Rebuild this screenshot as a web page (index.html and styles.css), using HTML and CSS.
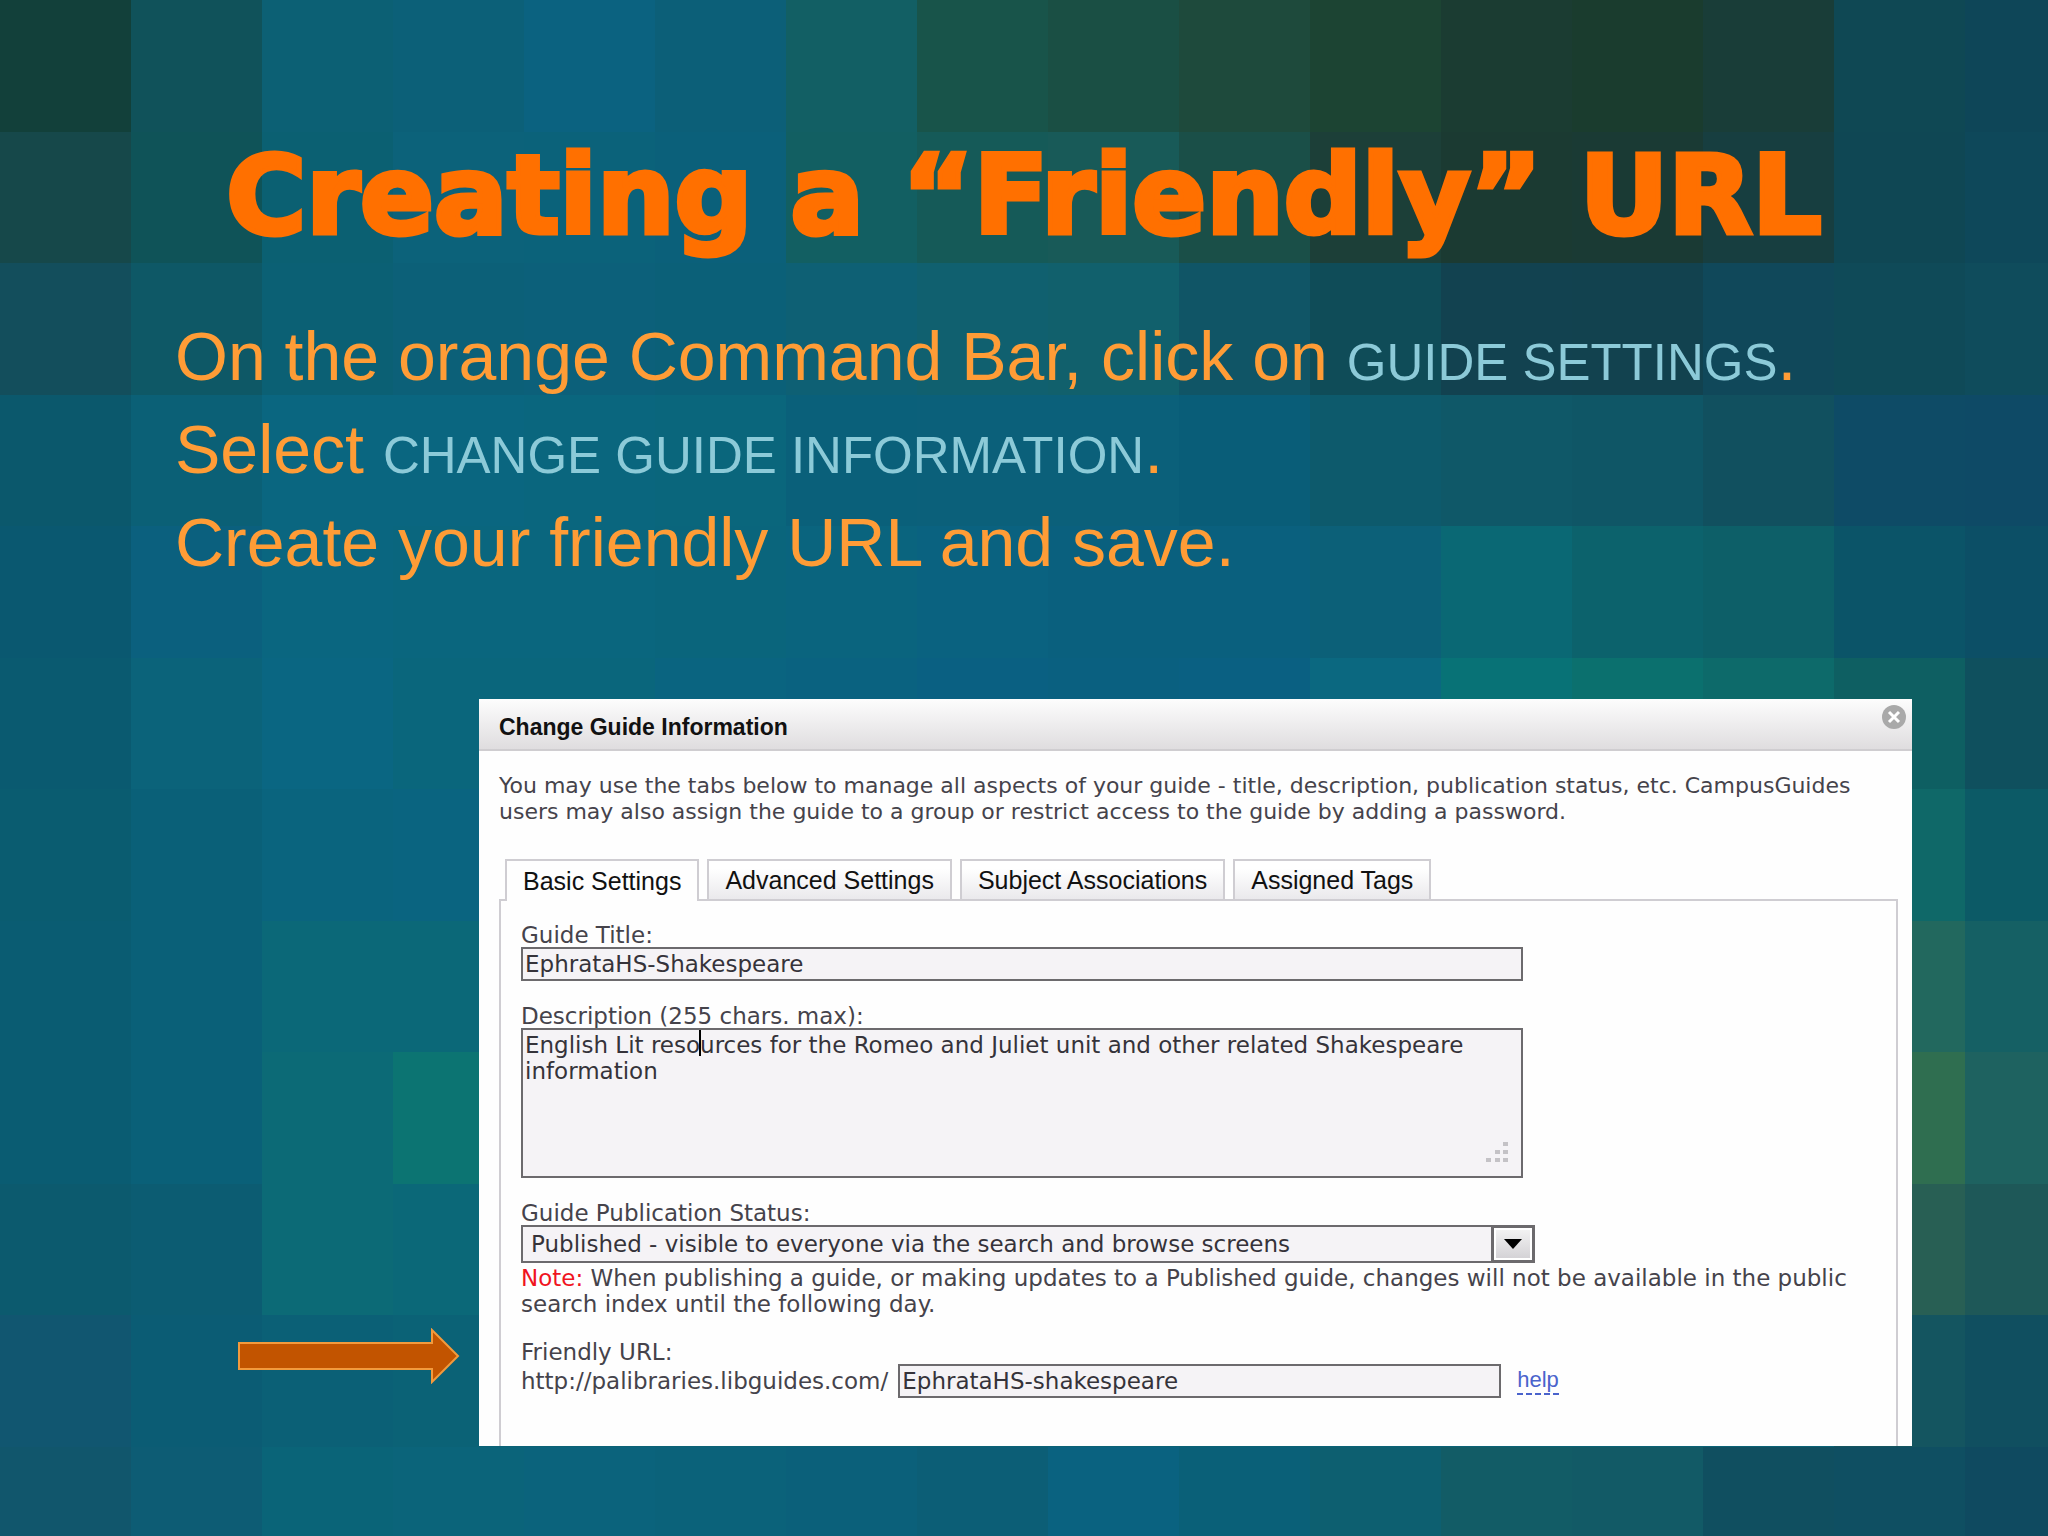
FILE: index.html
```html
<!DOCTYPE html>
<html lang="en">
<head>
<meta charset="utf-8">
<title>Creating a “Friendly” URL</title>
<link rel="stylesheet" href="styles.css">
</head>
<body>
<div class="mosaic" id="mosaic" aria-hidden="true"></div>
<main class="slide">
  <h1 class="title">Creating a “Friendly” URL</h1>
  <div class="steps">
    <p>On the orange Command Bar, click on <span class="command">GUIDE SETTINGS</span>.</p>
    <p>Select <span class="command">CHANGE GUIDE INFORMATION</span>.</p>
    <p>Create your friendly URL and save.</p>
  </div>
  <div class="demo">
    <svg class="arrow" width="224" height="56" viewBox="0 0 224 56" aria-hidden="true">
      <path d="M2 15H195V2L221 28L195 54V41H2Z" fill="#c25400" stroke="#f39a3c" stroke-width="2"/>
    </svg>
    <section class="dialog">
      <header class="dialog-head">
        <h2>Change Guide Information</h2>
        <button class="close" type="button" aria-label="Close">
          <svg width="24" height="24" viewBox="0 0 24 24"><circle cx="12" cy="12" r="12" fill="#a9a9a9"/><path d="M7 7L17 17M17 7L7 17" stroke="#fff" stroke-width="3"/></svg>
        </button>
      </header>
      <div class="dialog-body">
        <p class="intro">You may use the tabs below to manage all aspects of your guide - title, description, publication status, etc. CampusGuides users may also assign the guide to a group or restrict access to the guide by adding a password.</p>
        <nav class="tabs">
          <button class="tab active" type="button">Basic Settings</button>
          <button class="tab" type="button">Advanced Settings</button>
          <button class="tab" type="button">Subject Associations</button>
          <button class="tab" type="button">Assigned Tags</button>
        </nav>
        <form class="panel">
          <div class="field">
            <label for="guide-title">Guide Title:</label>
            <input class="box wide" id="guide-title" type="text" value="EphrataHS-Shakespeare">
          </div>
          <div class="field">
            <label for="description">Description (255 chars. max):</label>
            <div class="area wide">
              <textarea class="box" id="description">English Lit resources for the Romeo and Juliet unit and other related Shakespeare information</textarea>
              <span class="caret"></span>
              <svg class="grip" width="24" height="20" viewBox="0 0 24 20" fill="#c4c2c6" aria-hidden="true"><path d="M18 0h5v4h-5zM10 8h5v4h-5zM18 8h5v4h-5zM1 16h5v4h-5zM10 16h5v4h-5zM18 16h5v4h-5z"/></svg>
            </div>
          </div>
          <div class="field">
            <label for="status">Guide Publication Status:</label>
            <div class="pick">
              <select class="box" id="status"><option>Published - visible to everyone via the search and browse screens</option></select>
              <span class="drop"><svg width="18" height="10" viewBox="0 0 18 10" aria-hidden="true"><path d="M0 0H18L9 10Z" fill="#000"/></svg></span>
            </div>
            <p class="note"><span class="warn">Note:</span> When publishing a guide, or making updates to a Published guide, changes will not be available in the public search index until the following day.</p>
          </div>
          <div class="field">
            <label for="url">Friendly URL:</label>
            <div class="url">
              <span>http://palibraries.libguides.com/</span>
              <input class="box" id="url" type="text" value="EphrataHS-shakespeare">
              <a class="help" href="#help">help</a>
            </div>
          </div>
        </form>
      </div>
    </section>
  </div>
</main>
<script src="mosaic.js"></script>
</body>
</html>
```
FILE: mosaic.js
```js
// Backdrop tiles, one string per row, sixteen colours each.
const rows = [
  "12403a 10525a 0c6074 0c6078 0b6280 0c5f78 125f64 18544a 1a4f44 1e4a3c 1c4433 1b3c32 1a3c2e 193d38 0f4854 0e4658",
  "16484a 0f5358 0b6072 0c627a 0b627a 0b607a 125f62 155a58 185a58 1a4f48 1c3f38 1b3a32 1a3a34 173e40 0f4754 0e485a",
  "134e5c 0e5866 0b6074 0c6078 0c607a 0b6078 0e6074 10606f 11606c 105566 0f4c58 124250 12424f 10485a 0f4a58 0f4c5c",
  "0b586c 0b6076 0a6680 0a6680 0a667e 0a667c 0a607a 0b607a 0b607a 095d78 0d5a6c 0f5868 0f5666 11505f 0e4b66 0e4a66",
  "0a5870 0b607e 0a6680 0a667e 0a667e 0a657c 0a647e 0a6280 0a607e 0a607e 0c6078 0a6874 0c626c 0d5f68 0b5468 0c4f66",
  "0a5a70 0b637a 0a6682 0a667c 0a667c 0a6480 0a6280 0a6082 0a6080 0a6082 0b6880 087276 0b706e 0d6a6a 0e5f62 0f505e",
  "0a5c70 0a6078 0a647e 0a6480 0a6480 0a6480 0a6480 0a6480 0a6480 0a6480 0a6480 0a6480 0a6480 0a6480 0f6868 0c5a66",
  "0a5c72 0a6078 0b6878 0b6878 0a6c78 0a6c78 0a6c78 0a6c78 0a6c78 0a6c78 0a6c78 0a6c78 0a6c78 0a6c78 22685e 156064",
  "0a5c72 0a6078 0c6a76 0c7472 0c7472 0c7472 0c7472 0c7472 0c7472 0c7472 0c7472 0c7472 0c7472 0c7472 2f6e50 1e6260",
  "0c5a6e 0c5c72 0c6a76 0b6878 0a6c78 0a6c78 0a6c78 0a6c78 0a6c78 0a6c78 0a6c78 0a6c78 0a6c78 0a6c78 285f54 1e5858",
  "115670 0b5c74 0b6076 0b6276 0b6276 0b6276 0b6276 0b6276 0b6276 0b6276 0b6276 0b6276 0b6276 0b6276 145560 104f60",
  "11566c 0d5c74 0a6478 0b647a 0b637c 0b627a 0b607a 0c5e76 0a6280 0a6078 0d5f70 125c66 125a66 104f60 0f4f62 0f4a60"
];
const mosaic = document.getElementById("mosaic");
for (const row of rows) {
  for (const colour of row.split(" ")) {
    const tile = document.createElement("i");
    tile.style.backgroundColor = "#" + colour;
    mosaic.append(tile);
  }
}
```
FILE: styles.css
```css
* { box-sizing: border-box; }
body, h1, h2, p { margin: 0; }
body { position: relative; min-height: 100vh; background: #0b6078; font-family: "DejaVu Sans", Verdana, sans-serif; }

.mosaic { position: absolute; inset: 0; z-index: -1; overflow: hidden; display: grid; grid-template-columns: repeat(15, 131fr) 83fr; grid-template-rows: repeat(11, 263fr) 178fr; }

.slide { min-height: 100vh; padding: 124px 136px 88px 175px; }
.title { font: bold 109px/144px "Arial Black", "DejaVu Sans", sans-serif; color: #ff7000; -webkit-text-stroke: 5px #ff7000; text-align: center; white-space: nowrap; margin-left: -39px; }
.steps { margin-top: 42px; font: 68px/93px "Liberation Sans", Arial, sans-serif; color: #ff9c36; }
.command { font-size: 51px; line-height: 1; color: #8ccad8; }

.demo { display: flex; justify-content: space-between; align-items: flex-end; margin-top: 110px; }
.arrow { flex: none; margin: 0 18px 62px 62px; }
.dialog { flex: 1; background: #fefefe; }
.dialog-head { display: flex; justify-content: space-between; height: 52px; padding: 6px 6px 0 20px; border-bottom: 2px solid #cfcdd0; background: linear-gradient(#fdfdfd, #dfdddf); }
.dialog-head h2 { font: bold 23px/44px "Liberation Sans", Arial, sans-serif; color: #111; }
.close { width: 24px; height: 24px; padding: 0; border: 0; background: none; }
.close svg { display: block; }
.dialog-body { padding: 22px 14px 0 20px; font-size: 23px; line-height: 26px; color: #45434b; }
.intro { font-size: 22px; }

.tabs { display: flex; gap: 8px; margin-top: 34px; padding-left: 6px; }
.tab { height: 40px; padding: 0 16px; border: 2px solid #cfcdd2; border-bottom: 0; background: linear-gradient(#fff 20%, #eae9ec); font: 25px/36px "Liberation Sans", Arial, sans-serif; color: #111; }
.tab.active { height: 42px; margin-bottom: -2px; background: #fefefe; z-index: 1; }

.panel { display: flex; flex-direction: column; gap: 23px; padding: 22px 20px 48px; border: 2px solid #cfcdd2; border-bottom: 0; }
.field label { display: block; line-height: 24px; }
.box { display: block; width: 100%; height: 34px; padding: 0 2px; border: 2px solid #6c6a6d; border-radius: 0; background: #f5f3f6; font: 23px/26px "DejaVu Sans", Verdana, sans-serif; color: #35333a; outline: 0; }
.wide { max-width: 1002px; }
.area { position: relative; }
textarea.box { height: 150px; padding-top: 2px; resize: none; overflow: hidden; }
.caret { position: absolute; left: 178px; top: 2px; width: 2px; height: 26px; background: #000; }
.grip { position: absolute; right: 14px; bottom: 16px; }
.pick { position: relative; max-width: 1014px; }
select.box { height: 38px; padding: 0 50px 0 8px; appearance: none; }
.drop { position: absolute; top: 0; right: 0; width: 44px; height: 38px; display: flex; align-items: center; justify-content: center; border: 3px solid #6c6a6d; box-shadow: inset 0 0 0 2px #fff; background: linear-gradient(#f4f4f4, #d2d0d4); pointer-events: none; }
.note { margin-top: 2px; }
.warn { color: #f0141e; }
.url { display: flex; align-items: center; }
.url .box { width: 603px; margin: 0 16px 0 10px; }
.help { font: 22px/26px "Liberation Sans", Arial, sans-serif; color: #4a63cc; text-decoration: none; border-bottom: 2px dashed #4a63cc; }
```
